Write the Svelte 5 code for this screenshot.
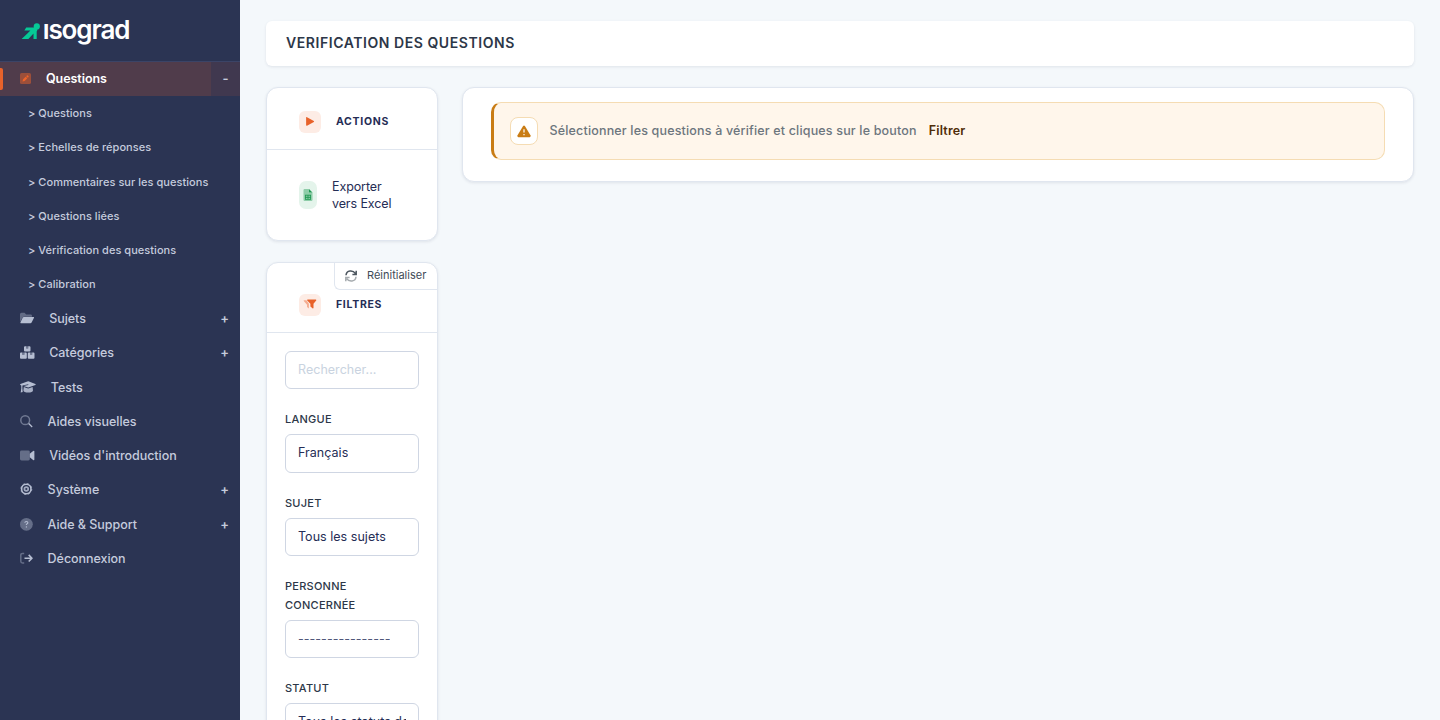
<script>
  const subs = ['Questions', 'Echelles de réponses', 'Commentaires sur les questions', 'Questions liées', 'Vérification des questions', 'Calibration'];
  const items = [
    { t: 'Sujets', w: 14.6, icon: 'folder', plus: true },
    { t: 'Catégories', w: 14.6, icon: 'boxes', plus: true },
    { t: 'Tests', w: 16.25, icon: 'cap' },
    { t: 'Aides visuelles', w: 13, icon: 'search' },
    { t: "Vidéos d'introduction", w: 14.6, icon: 'video' },
    { t: 'Système', w: 13, icon: 'gear', plus: true },
    { t: 'Aide & Support', w: 13, icon: 'help', plus: true },
    { t: 'Déconnexion', w: 13, icon: 'exit' }
  ];
  const fields = [
    { label: 'LANGUE', value: 'Français', h: 39 },
    { label: 'SUJET', value: 'Tous les sujets', h: 38 },
    { label: 'PERSONNE CONCERNÉE', value: '----------------', h: 38, muted: true },
    { label: 'STATUT', value: 'Tous les statuts de question', h: 38 }
  ];
</script>

<div class="app">
  <aside>
    <div class="brand">
      <svg width="140" height="40" viewBox="0 0 140 40">
        <g fill="#06c896">
          <circle cx="14.8" cy="9.4" r="3.1" />
          <path d="M4.2 10.5H12.2L15.6 12.6L14.7 14.6V22H11.5V16.4L6.4 21.9H-.4L5.4 16.6L8.4 13.4H2.4Z" />
        </g>
        <text class="logo" x="20.8" y="21.8" textLength="87.6" lengthAdjust="spacing">ısograd</text>
      </svg>
    </div>
    <nav>
      <div class="current">
        <span class="bar"></span>
        <svg class="pen" width="11" height="11" viewBox="0 0 11 11"><rect width="11" height="11" rx="1.6" fill="#e8622a" opacity=".5" /><path d="M2.5 8.5L3.1 6.3L5.7 3.7L7.3 5.3L4.7 7.9ZM6.2 3.2L6.9 2.5Q7.4 2.1 7.9 2.6L8.4 3.1Q8.9 3.6 8.5 4.1L7.8 4.8Z" fill="#ef642a" /></svg>
        <span class="grow">Questions</span>
        <span class="toggle">-</span>
      </div>
      {#each subs as s}
        <div class="sub">&gt; {s}</div>
      {/each}
      {#each items as i}
        <div class="item">
          <svg width={i.w} height="13" viewBox="0 0 {i.w} 13">
            {#if i.icon === 'folder'}
              <path opacity=".4" d="M0 9V2.3Q0 .8 1.5.8H4.5L6.2 2.4H10.6Q12 2.4 12 3.8V4.8H4Q3 4.8 2.4 5.8L0 10Z" />
              <path d="M3.8 5H13.6Q14.4 5.1 13.9 6L11.6 10.5Q11.2 11.2 10.4 11.2H.9Q0 11.1.5 10.2L2.8 5.6Q3.1 5 3.8 5Z" />
            {:else if i.icon === 'boxes'}
              <path d="M5 .3H6.2V2.5H8.2V.3H9.5Q10.5.3 10.5 1.3V4.6Q10.5 5.6 9.5 5.6H5Q4 5.6 4 4.6V1.3Q4 .3 5 .3ZM1 6.5H2.2V8.7H4.4V6.5H5.8Q6.8 6.5 6.8 7.5V11.7Q6.8 12.7 5.8 12.7H1Q0 12.7 0 11.7V7.5Q0 6.5 1 6.5ZM8.8 6.5H10.1V8.7H12.2V6.5H13.5Q14.5 6.5 14.5 7.5V11.7Q14.5 12.7 13.5 12.7H8.8Q7.8 12.7 7.8 11.7V7.5Q7.8 6.5 8.8 6.5Z" />
              <path opacity=".5" d="M6.2.3h2v2.2h-2zM2.2 6.5h2.2v2.2H2.2zM10.1 6.5h2.1v2.2h-2.1z" />
            {:else if i.icon === 'cap'}
              <path d="M.4 3L7.4.4Q8.2.1 9 .4L15.4 2.9Q16.1 3.4 15.4 3.9L9 6.3Q8.2 6.6 7.4 6.3L3.6 4.9L8.3 4V3.2L2.4 4.4V7.5L2.7 11L.7 11.4L1.3 7.6V4.4L.4 3.9Q-.2 3.5.4 3Z" />
              <path opacity=".9" d="M3.8 6.1L7.3 7.3Q8.2 7.6 9.1 7.3L12.6 6.1L13 9.6Q12.5 11.6 8.2 11.6T3.4 9.6Z" />
            {:else if i.icon === 'search'}
              <circle cx="5.2" cy="5.2" r="4.4" fill="none" stroke="#b6bed2" stroke-width="1.5" opacity=".5" />
              <path d="M8.2 9L9.1 8.1L12.6 11.6L11.8 12.6Z" />
            {:else if i.icon === 'video'}
              <rect y="1.6" width="9.8" height="9.8" rx="1.5" opacity=".42" />
              <path d="M9.8 4.8L13.1 2Q14.4 1.4 14.4 2.8V10.3Q14.4 11.6 13.1 11L9.8 8.3Z" />
            {:else if i.icon === 'gear'}
              <circle cx="6.3" cy="6" r="4.7" fill="none" stroke="#b6bed2" stroke-width="1.6" />
              <circle cx="6.3" cy="6" r="5.5" fill="none" stroke="#b6bed2" stroke-width=".7" stroke-dasharray="2.2 2.12" />
              <circle cx="6.3" cy="6" r="1.9" fill="none" stroke="#b6bed2" stroke-width="1.7" opacity=".85" />
            {:else if i.icon === 'help'}
              <circle cx="6.4" cy="6.3" r="6.4" opacity=".42" />
              <path d="M4.8 4.8Q4.9 3.5 6.4 3.5T7.9 4.7Q7.9 5.5 6.4 6.3V7.1" fill="none" stroke="#b6bed2" stroke-width="1.1" />
              <circle cx="6.4" cy="8.9" r=".7" />
            {:else}
              <path d="M4.2 1.4H2.5Q.8 1.4.8 3.1V9.3Q.8 11 2.5 11H4.2" fill="none" stroke="#b6bed2" stroke-width="1.5" opacity=".42" />
              <path d="M4.5 6.2H12M8.7 2.9L12 6.2L8.7 9.5" fill="none" stroke="#b6bed2" stroke-width="1.6" stroke-linejoin="round" />
            {/if}
          </svg>
          <span class="grow">{i.t}</span>
          {#if i.plus}<span class="plus">+</span>{/if}
        </div>
      {/each}
    </nav>
  </aside>
  <main>
    <h1>VERIFICATION DES QUESTIONS</h1>
    <div class="columns">
      <div class="left">
        <section class="card actions">
          <header>
            <span class="badge"><svg width="10" height="10" viewBox="0 0 10 10"><path d="M1.1.8Q1.1-.2 2 .2L8.8 4Q9.5 4.5 8.8 5L2 8.8Q1.1 9.1 1.1 8.1Z" fill="#e8622a" /></svg></span>
            <h2>ACTIONS</h2>
          </header>
          <div class="export">
            <span class="xls"><svg width="10" height="12" viewBox="0 0 10 12"><path d="M1.5 0H6V3.5H9.5V10.8Q9.5 12 8.3 12H1.7Q.5 12 .5 10.8V1.2Q.5 0 1.5 0Z" fill="#1f9852" opacity=".43" /><path d="M6 0L9.5 3.5H6ZM2 5.8H8V10.8H2Z" fill="#1f9852" /><path d="M2.8 7.2H4.6M5.4 7.2H7.2M2.8 9.3H4.6M5.4 9.3H7.2" stroke="#c4e6d2" stroke-width=".8" /></svg></span>
            <span>Exporter<br />vers Excel</span>
          </div>
        </section>
        <section class="card filters">
          <div class="reset">
            <svg width="12" height="12" viewBox="0 0 12 12" fill="none" stroke="#4b555e" stroke-width="1.5"><path d="M1 5.2C1.5 0 8-.2 10.3 3.4M11.2.8V4.5H7.4" /><path opacity=".5" d="M11 6.8C10.5 12 4 12.2 1.7 8.6M.8 11.2V7.5H4.6" /></svg>
            <span>Réinitialiser</span>
          </div>
          <header>
            <span class="badge"><svg width="14" height="11" viewBox="0 0 14 11"><path d="M.9 1.2H3.4L5.9 4.8V9.5L4 8V5.8L.8 2Q.5 1.4.9 1.2Z" fill="#e8622a" opacity=".45" /><path d="M4.5.4H12.9Q13.6.7 13.2 1.4L10.5 4.8V9.1Q10.1 9.7 9.5 9.2L7.4 7.6V4.8L4.2 1.4Q3.9.7 4.5.4Z" fill="#e8622a" /></svg></span>
            <h2>FILTRES</h2>
          </header>
          <div class="form">
            <div class="box search">Rechercher...</div>
            {#each fields as f}
              <div class="label">{f.label}</div>
              <div class="box" class:muted={f.muted} style="height: {f.h}px"><span>{f.value}</span></div>
            {/each}
          </div>
        </section>
      </div>
      <section class="card content">
        <div class="alert">
          <span class="warn"><svg width="14" height="13" viewBox="0 0 14 13"><path d="M6.1 1Q7 0 7.9 1L13.6 10.6Q14 12 12.7 12.2H1.3Q0 12 .4 10.6Z" fill="#c97c14" /><path d="M7 4.3V7.5M7 9V10.3" stroke="#fff" stroke-width="1.2" /></svg></span>
          <span class="msg">Sélectionner les questions à vérifier et cliques sur le bouton</span>
          <strong>Filtrer</strong>
        </div>
      </section>
    </div>
  </main>
</div>

<style>
  :global(body) { margin: 0; overflow: hidden; }
  .app { display: flex; height: 720px; overflow: hidden; font-family: Inter, sans-serif; background: #f4f8fb; color: #252d55; }
  .app :global(*) { box-sizing: border-box; }
  svg { display: block; flex: none; overflow: visible; }
  aside { width: 240px; flex: none; background: #2b3453; color: #c5cbdd; }
  .brand { height: 62px; padding: 17px 0 0 22px; border-bottom: 1px solid #3b4467; }
  .logo { fill: #fff; font-size: 26px; font-weight: 600; }
  .current { display: flex; align-items: center; height: 34.3px; background: #503c4b; color: #fff; font-size: 12.5px; font-weight: 600; letter-spacing: -.05px; }
  .current .grow { padding-bottom: 1px; }
  .bar { width: 3px; height: 22px; background: #e8622a; border-radius: 0 2px 2px 0; }
  .pen { margin: 0 15px 1px 17px; }
  .grow { flex: 1; }
  .toggle { width: 29px; height: 34.3px; padding-bottom: 2px; display: flex; align-items: center; justify-content: center; background: #40384f; color: #c5cbdd; font-size: 13px; }
  .sub { height: 34.2px; line-height: 35.2px; padding-left: 28px; font-size: 11px; font-weight: 500; letter-spacing: .04px; }
  .item { display: flex; align-items: center; height: 34.25px; padding: 0 11px 0 20px; gap: 14.6px; font-size: 12.5px; font-weight: 500; letter-spacing: -.04px; }
  .item svg { fill: #b6bed2; }
  .plus { font-size: 13px; font-weight: 600; padding-bottom: 1px; }
  main { flex: 1; padding: 21px 26px 0; }
  h1 { margin: 0; height: 45px; line-height: 43px; padding-left: 20px; background: #fff; border-radius: 6px; box-shadow: 0 1px 3px rgba(43, 52, 83, .1); font-size: 14px; font-weight: 600; letter-spacing: .56px; color: #2d3748; }
  .columns { display: flex; align-items: flex-start; gap: 24px; margin-top: 21px; }
  .left { width: 172px; display: flex; flex-direction: column; gap: 21px; }
  .card { background: #fff; border: 1px solid #e0e6ef; border-radius: 12px; box-shadow: 0 1px 3px rgba(43, 52, 83, .1); }
  .actions { height: 154px; }
  header { display: flex; align-items: center; height: 62px; padding: 6px 0 0 32px; gap: 15px; border-bottom: 1px solid #e0e6ef; }
  .badge { display: flex; align-items: center; justify-content: center; width: 22px; height: 22px; border-radius: 6px; background: #fdece5; }
  h2 { margin: 0; font-size: 10.5px; line-height: 14px; padding-top: 1px; font-weight: 700; letter-spacing: .7px; }
  .export { display: flex; align-items: center; height: 90px; padding-left: 32px; gap: 15px; font-size: 12.5px; line-height: 17px; letter-spacing: -.1px; }
  .xls { display: flex; align-items: center; justify-content: center; width: 18px; height: 28px; border-radius: 7px; background: #e4f4eb; }
  .filters { position: relative; height: 520px; }
  .filters header { height: 70px; padding-top: 14px; }
  .reset { position: absolute; right: 0; top: 0; display: flex; align-items: center; gap: 10px; width: 103px; height: 27px; padding: 0 0 1px 10px; border-left: 1px solid #e0e6ef; border-bottom: 1px solid #e0e6ef; border-radius: 0 0 0 6px; font-size: 11px; color: #414b57; white-space: nowrap; }
  .reset span { padding-bottom: 2px; }
  .form { padding: 18px 18px 0; }
  .box { height: 38px; border: 1px solid #cfd6e3; border-radius: 6px; padding: 0 12px 2px; display: flex; align-items: center; font-size: 12.5px; letter-spacing: .03px; white-space: nowrap; overflow: hidden; }
  .box span { overflow: hidden; }
  .search { color: #c9d3e0; padding-bottom: 1px; }
  .muted { color: #50577a; }
  .label { margin: 21px 0 5px; font-size: 11px; font-weight: 500; line-height: 19px; letter-spacing: .25px; color: #2d3748; }
  .content { flex: 1; height: 95px; padding: 14px 28px; }
  .alert { display: flex; align-items: center; height: 58px; padding-left: 16px; border: 1px solid #f5dcb3; border-left: 3px solid #c97c14; border-radius: 10px; background: #fff6eb; font-size: 12.5px; letter-spacing: .17px; color: #6c757d; }
  .warn { display: flex; align-items: center; justify-content: center; width: 28px; height: 28px; border: 1px solid #f5dcb3; border-radius: 8px; background: #fff; }
  .msg { margin: 0 12px 0 11.5px; padding-bottom: 1px; font-weight: 500; }
  strong { padding-bottom: 1px; font-weight: 600; color: #4f2d08; }
</style>
